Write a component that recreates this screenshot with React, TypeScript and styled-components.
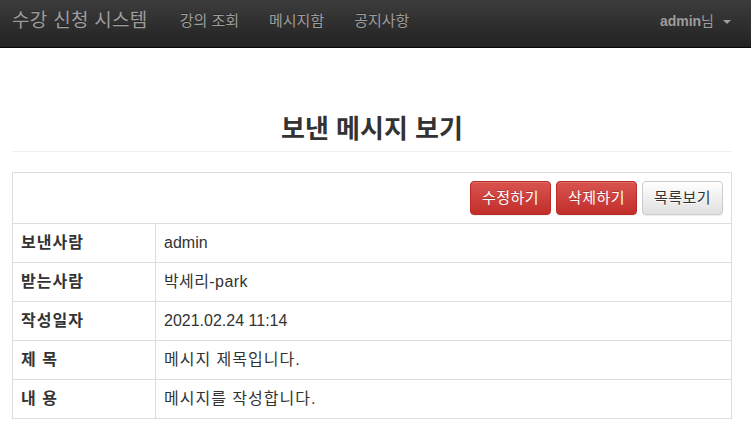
import React from "react";
import styled, { createGlobalStyle } from "styled-components";

const Global = createGlobalStyle`
  html, body { margin: 0; padding: 0; background: #fff; }
  body {
    font-family: "Liberation Sans", "Noto Sans CJK KR", sans-serif;
    font-size: 16px;
    color: #333;
  }
  * { box-sizing: border-box; }
`;

const Navbar = styled.nav`
  height: 48px;
  background: linear-gradient(to bottom, #3c3c3c 0%, #222 100%);
  border-bottom: 1px solid #080808;
  display: flex;
  align-items: flex-start;
  padding: 0 12px;
`;

const Brand = styled.a`
  font-size: 19px;
  line-height: 20px;
  padding-top: 11px;
  color: #9d9d9d;
  text-shadow: 0 -1px 0 rgba(0, 0, 0, 0.25);
  text-decoration: none;
  margin-right: 17px;
  white-space: nowrap;
  letter-spacing: 0.3px;
`;

const NavList = styled.ul`
  list-style: none;
  display: flex;
  margin: 0;
  padding: 0;
`;

const NavLink = styled.a`
  display: block;
  padding: 11px 15px 0;
  line-height: 20px;
  font-size: 15px;
  color: #9d9d9d;
  text-decoration: none;
  text-shadow: 0 -1px 0 rgba(0, 0, 0, 0.25);
`;

const UserMenu = styled.div`
  margin-left: auto;
  padding-top: 11px;
  padding-right: 8px;
  line-height: 20px;
  font-size: 14px;
  color: #9d9d9d;
  display: flex;
  align-items: center;
  white-space: nowrap;
`;

const Caret = styled.span`
  display: inline-block;
  width: 0;
  height: 0;
  margin-left: 9px;
  margin-top: 2px;
  border-top: 4px solid #9d9d9d;
  border-left: 4px solid transparent;
  border-right: 4px solid transparent;
`;

const Container = styled.main`
  padding: 0 19px 0 12px;
`;

const PageHeader = styled.div`
  margin-top: 68px;
  padding-bottom: 9px;
  border-bottom: 1px solid #eee;
  margin-bottom: 20px;
`;

const Title = styled.h3`
  margin: 0;
  font-size: 26px;
  line-height: 26px;
  font-weight: bold;
  text-align: center;
  color: #333;
`;

const Table = styled.table`
  width: 100%;
  border-collapse: collapse;
  border: 1px solid #ddd;
`;

const ActionCell = styled.td`
  border: 1px solid #ddd;
  padding: 8px;
  text-align: right;
`;

const ButtonGroup = styled.div`
  display: flex;
  justify-content: flex-end;
  gap: 5px;
`;

const Button = styled.button<{ $variant: "danger" | "default" }>`
  font-family: inherit;
  font-size: 15px;
  line-height: 20px;
  padding: 0;
  height: 34px;
  width: 81px;
  border-radius: 4px;
  cursor: pointer;
  letter-spacing: 0.5px;
  border: 1px solid ${(p) => (p.$variant === "danger" ? "#b92c28" : "#ccc")};
  color: ${(p) => (p.$variant === "danger" ? "#fff" : "#333")};
  background: ${(p) =>
    p.$variant === "danger"
      ? "linear-gradient(to bottom, #d9534f 0%, #c12e2a 100%)"
      : "linear-gradient(to bottom, #fff 0%, #e0e0e0 100%)"};
  text-shadow: ${(p) =>
    p.$variant === "danger" ? "0 -1px 0 rgba(0,0,0,.2)" : "0 1px 0 #fff"};
  box-shadow: inset 0 1px 0 rgba(255, 255, 255, 0.15), 0 1px 1px rgba(0, 0, 0, 0.075);
`;

const Row = styled.tr``;

const Label = styled.th`
  width: 143px;
  text-align: left;
  font-weight: bold;
  border: 1px solid #ddd;
  padding: 8px 8px;
  line-height: 22px;
  letter-spacing: 1px;
`;

const Value = styled.td<{ $spacing: number }>`
  border: 1px solid #ddd;
  padding: 8px 8px;
  line-height: 22px;
  letter-spacing: ${(p) => p.$spacing}px;
`;

const rows: [string, string, number][] = [
  ["보낸사람", "admin", 0],
  ["받는사람", "박세리-park", 0.4],
  ["작성일자", "2021.02.24 11:14", 0],
  ["제 목", "메시지 제목입니다.", 1],
  ["내 용", "메시지를 작성합니다.", 1],
];

export default function App() {
  return (
    <>
      <Global />
      <Navbar>
        <Brand href="#">수강 신청 시스템</Brand>
        <NavList>
          <li><NavLink href="#">강의 조회</NavLink></li>
          <li><NavLink href="#">메시지함</NavLink></li>
          <li><NavLink href="#">공지사항</NavLink></li>
        </NavList>
        <UserMenu>
          <b>admin</b>님
          <Caret />
        </UserMenu>
      </Navbar>
      <Container>
        <PageHeader>
          <Title>보낸 메시지 보기</Title>
        </PageHeader>
        <Table>
          <tbody>
            <Row>
              <ActionCell colSpan={2}>
                <ButtonGroup>
                  <Button $variant="danger">수정하기</Button>
                  <Button $variant="danger">삭제하기</Button>
                  <Button $variant="default">목록보기</Button>
                </ButtonGroup>
              </ActionCell>
            </Row>
            {rows.map(([k, v, s]) => (
              <Row key={k}>
                <Label>{k}</Label>
                <Value $spacing={s}>{v}</Value>
              </Row>
            ))}
          </tbody>
        </Table>
      </Container>
    </>
  );
}
